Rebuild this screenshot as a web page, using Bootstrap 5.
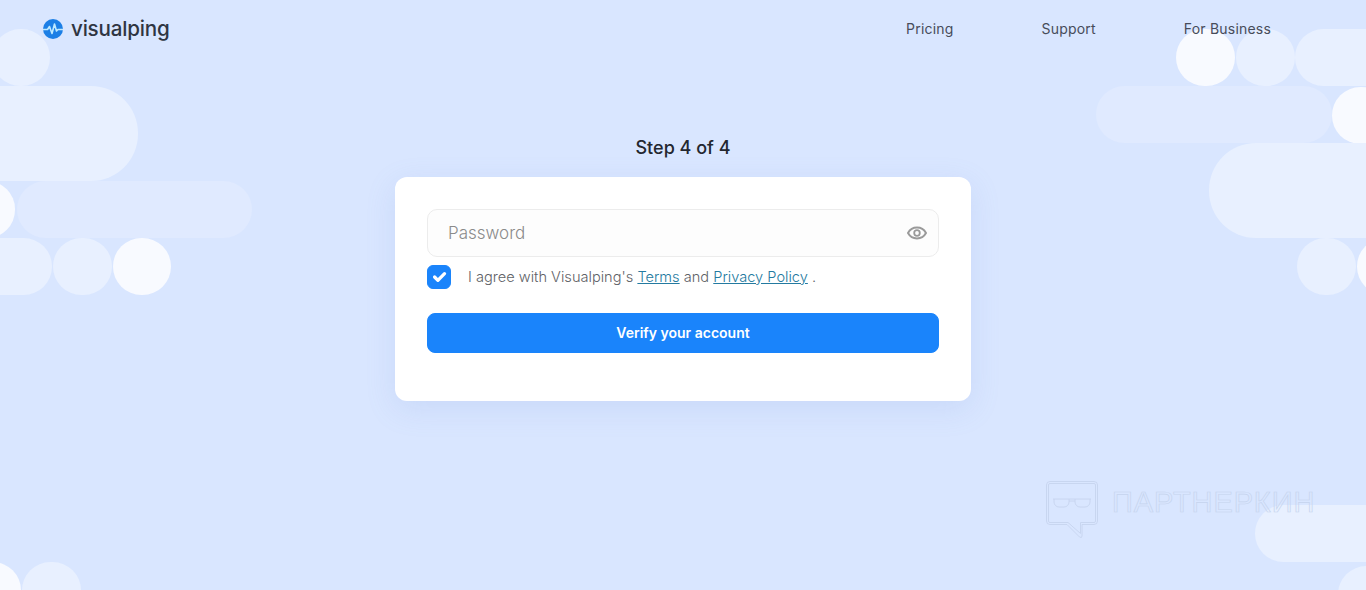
<!DOCTYPE html>
<html lang="en">
<head>
  <meta charset="utf-8">
  <title>Visualping - Step 4 of 4</title>
  <link href="https://cdn.jsdelivr.net/npm/bootstrap@5.3.3/dist/css/bootstrap.min.css" rel="stylesheet">
  <style>
    html, body { height: 590px; overflow: hidden; }
    body { background: #d9e6ff; font-family: Inter, "Noto Sans", sans-serif; color: #2d3340; position: relative; }

    /* background shapes */
    .bg-layer { position: absolute; inset: 0; overflow: hidden; }
    .shape { position: absolute; height: 57px; border-radius: 29px; background: #e8f0ff; }
    .shape-soft { background: #e0eaff; }
    .shape-white { background: #f8faff; }
    .shape-big { height: 95px; border-radius: 47px; }

    .top-bar { position: relative; padding: 16px 95px 0 43px; height: 58px; align-items: flex-start; }
    .brand-link { font-size: 20.600px; font-weight: 500; line-height: 25px; color: #2f3542; letter-spacing: -0.2px; padding: 0; margin: 0; }
    .brand-link:hover { color: #2f3542; }
    .top-links { gap: 88px; }
    .top-links .nav-link { font-size: 14px; line-height: 25px; color: #474c5a; padding: 0; letter-spacing: 0.2px; }

    .main-col { position: relative; width: 576px; margin: 0 auto; padding-top: 78px; }
    .step-title { font-size: 18px; font-weight: 500; line-height: 24px; margin: 0 0 17px; text-align: center; color: #23272f; }
    .login-card { border: 0; border-radius: 12px; height: 224px; padding: 32px; box-shadow: 0 8px 30px rgba(120, 150, 220, .16); }
    .pass-wrap { position: relative; }
    .pass-input { height: 48px; border: 1px solid #ececec; border-radius: 10px; background: #fdfdfd; padding: 0 56px 0 20px; font-size: 17px; font-weight: 300; }
    .pass-input::placeholder { color: #8b8b8b; }
    .eye-icon { position: absolute; right: 12px; top: 15px; }
    .terms-row { margin: 8px 0 24px; padding: 0; min-height: 24px; gap: 17px; }
    .terms-row .form-check-input { width: 24px; height: 24px; margin: 0; float: none; border-radius: 6px; background-color: #1a84fb; border-color: #1a84fb; flex-shrink: 0; }
    .terms-row .form-check-label { font-size: 14.600px; font-weight: 300; line-height: 24px; color: #5f6368; }
    .terms-row a { color: #247aa0; }
    .verify-btn { height: 40px; border-radius: 8px; background: #1a84fb; border-color: #1a84fb; font-size: 14px; font-weight: 600; line-height: 26px; padding: 6px 12px; }

    .mark-logo { position: absolute; left: 1045px; top: 480px; }
    .mark-text { position: absolute; left: 1112px; top: 485px; font-family: "Liberation Sans", sans-serif; font-size: 29px; line-height: 34px; letter-spacing: 0.9px; color: transparent; -webkit-text-stroke: 0.7px #c6d4ee; white-space: nowrap; }
  </style>
</head>
<body>
  <div class="bg-layer">
    <div class="shape" style="left:-8px;top:29px;width:58px"></div>
    <div class="shape shape-big" style="left:-60px;top:86px;width:198px"></div>
    <div class="shape shape-white" style="left:-41px;top:181px;width:56px"></div>
    <div class="shape shape-soft" style="left:17px;top:181px;width:235px"></div>
    <div class="shape" style="left:-60px;top:238px;width:112px"></div>
    <div class="shape" style="left:53px;top:238px;width:59px"></div>
    <div class="shape shape-white" style="left:113px;top:238px;width:58px"></div>

    <div class="shape shape-white" style="left:1176px;top:29px;width:59px"></div>
    <div class="shape" style="left:1236px;top:29px;width:59px"></div>
    <div class="shape" style="left:1295px;top:29px;width:130px"></div>
    <div class="shape shape-soft" style="left:1096px;top:86px;width:236px"></div>
    <div class="shape shape-white" style="left:1332px;top:87px;width:58px"></div>
    <div class="shape shape-big" style="left:1209px;top:143px;width:220px"></div>
    <div class="shape" style="left:1297px;top:238px;width:59px"></div>
    <div class="shape shape-white" style="left:1357px;top:238px;width:58px"></div>

    <div class="shape shape-white" style="left:-38px;top:562px;width:59px"></div>
    <div class="shape" style="left:22px;top:562px;width:59px"></div>
    <div class="shape" style="left:1255px;top:505px;width:170px"></div>
    <div class="shape" style="left:1338px;top:566px;width:80px"></div>

    <svg class="mark-logo" width="54" height="59" viewBox="0 0 54 59" fill="none" stroke="#c6d4ee" stroke-width="0.900">
      <path d="M5 1.500h44a3.500 3.500 0 0 1 3.500 3.500v36a3.500 3.500 0 0 1-3.500 3.500H37v11.500q0 2.500-2.500 1L22 44.500H5A3.500 3.500 0 0 1 1.500 41V5A3.500 3.500 0 0 1 5 1.500z"/>
      <path d="M5 3.500h44a1.500 1.500 0 0 1 1.500 1.500v36a1.500 1.500 0 0 1-1.500 1.500H35.500v11L23 42.500H5A1.500 1.500 0 0 1 3.500 41V5A1.500 1.500 0 0 1 5 3.500z"/>
      <path d="M8 19h38M9 19v3a5 5 0 0 0 5 5h5a5 5 0 0 0 5-5v-3M30 19v3a5 5 0 0 0 5 5h5a5 5 0 0 0 5-5v-3M24 21h6"/>
    </svg>
    <div class="mark-text">ПАРТНЕРКИН</div>
  </div>

  <nav class="navbar top-bar">
    <a class="navbar-brand brand-link d-flex align-items-center gap-2" href="#">
      <svg width="20" height="20" viewBox="0 0 20 20">
        <circle cx="10" cy="10" r="10" fill="#1c7fe6"/>
        <path d="M0 10.500h4.500l2-3 2.500 7 2.500-9.500 2 7 1.500-1.500H20" fill="none" stroke="#bfeaff" stroke-width="1.600" stroke-linejoin="round"/>
      </svg>
      visualping
    </a>
    <div class="nav flex-row top-links">
      <a class="nav-link" href="#">Pricing</a>
      <a class="nav-link" href="#">Support</a>
      <a class="nav-link" href="#">For Business</a>
    </div>
  </nav>

  <main class="main-col">
    <h2 class="step-title">Step 4 of 4</h2>
    <div class="card login-card">
      <div class="pass-wrap">
        <input type="password" class="form-control pass-input" placeholder="Password">
        <svg class="eye-icon" width="20" height="18" viewBox="0 0 20 18" fill="none" stroke="#9a9a9a">
          <path d="M1 9c2-3.600 5-5.400 9-5.400s7 1.800 9 5.400c-2 3.600-5 5.400-9 5.400S3 12.600 1 9z" stroke-width="2"/>
          <circle cx="10" cy="9" r="2.800" stroke-width="1.800"/>
        </svg>
      </div>
      <div class="form-check d-flex align-items-center terms-row">
        <input class="form-check-input" type="checkbox" id="terms" checked>
        <label class="form-check-label" for="terms">I agree with Visualping's <a href="#">Terms</a> and <a href="#">Privacy Policy</a> .</label>
      </div>
      <button class="btn btn-primary w-100 verify-btn">Verify your account</button>
    </div>
  </main>

  <script src="https://cdn.jsdelivr.net/npm/bootstrap@5.3.3/dist/js/bootstrap.bundle.min.js"></script>
</body>
</html>
